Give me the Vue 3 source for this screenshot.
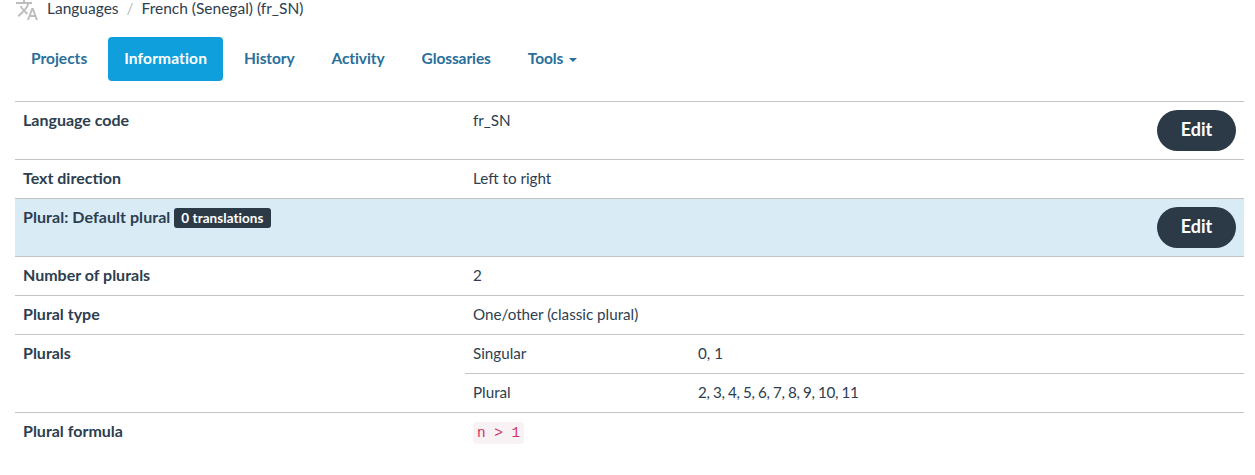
<template>
  <div class="page">
    <nav class="crumbs">
      <svg class="crumb-icon" viewBox="0 0 24 24" width="24" height="24">
        <path d="M12.87,15.07L10.33,12.56L10.36,12.53C12.1,10.59 13.34,8.36 14.07,6H17V4H10V2H8V4H1V6H12.17C11.5,7.92 10.44,9.75 9,11.35C8.07,10.32 7.3,9.19 6.69,8H4.69C5.42,9.63 6.42,11.17 7.67,12.56L2.58,17.58L4,19L9,14L12.11,17.11L12.87,15.07M18.5,10H16.5L12,22H14L15.12,19H19.87L21,22H23L18.5,10M15.88,17L17.5,12.67L19.12,17H15.88Z" />
      </svg>
      <a class="crumb">Languages</a>
      <span class="crumb-sep">/</span>
      <a class="crumb">French (Senegal) (fr_SN)</a>
    </nav>

    <ul class="tabs">
      <li v-for="tab in tabs" :key="tab" class="tab" :class="{ active: tab === 'Information' }">
        {{ tab }}
        <span v-if="tab === 'Tools'" class="caret"></span>
      </li>
    </ul>

    <table class="info">
      <colgroup>
        <col class="col-head" />
        <col class="col-mid" />
        <col />
        <col class="col-btn" />
      </colgroup>
      <tbody>
        <tr class="tall">
          <th>Language code</th>
          <td colspan="2">fr_SN</td>
          <td class="btn-cell"><button class="edit">Edit</button></td>
        </tr>
        <tr>
          <th>Text direction</th>
          <td colspan="3">Left to right</td>
        </tr>
        <tr class="tall highlight">
          <th colspan="3">Plural: Default plural <span class="badge">0 translations</span></th>
          <td class="btn-cell"><button class="edit">Edit</button></td>
        </tr>
        <tr>
          <th>Number of plurals</th>
          <td colspan="3">2</td>
        </tr>
        <tr>
          <th>Plural type</th>
          <td colspan="3">One/other (classic plural)</td>
        </tr>
        <tr>
          <th rowspan="2">Plurals</th>
          <td>Singular</td>
          <td colspan="2">0, 1</td>
        </tr>
        <tr>
          <td>Plural</td>
          <td colspan="2" class="digits">2, 3, 4, 5, 6, 7, 8, 9, 10, 11</td>
        </tr>
        <tr>
          <th>Plural formula</th>
          <td colspan="3"><code class="formula">n &gt; 1</code></td>
        </tr>
      </tbody>
    </table>
  </div>
</template>

<script setup>
const tabs = ['Projects', 'Information', 'History', 'Activity', 'Glossaries', 'Tools']
</script>

<style>
html,
body {
  margin: 0;
  background: #fff;
  overflow: hidden;
}
</style>

<style scoped>
.page {
  padding: 0 11px 0 15px;
  font-family: Lato, "Open Sans", sans-serif;
  font-size: 15.2px;
  color: #2c3e50;
  height: 475px;
  box-sizing: border-box;
  overflow: hidden;
}

.crumbs {
  display: flex;
  align-items: flex-start;
  height: 24px;
  margin-top: -2px;
  font-size: 15.5px;
  line-height: 20px;
  white-space: nowrap;
}

.crumb-icon {
  width: 24px;
  height: 24px;
  margin-right: 8px;
  fill: #bdbdbd;
  flex: none;
}

.crumb-sep {
  margin: 0 8px;
  color: #bbb;
}

.tabs {
  display: flex;
  gap: 5px;
  list-style: none;
  margin: 15px 0 20px;
  padding: 0;
}

.tab {
  padding: 0 16px;
  height: 44px;
  line-height: 42px;
  font-size: 15.5px;
  font-weight: 700;
  color: #2a6f9b;
  border-radius: 4px;
  white-space: nowrap;
}

.tab:nth-child(n+3) {
  letter-spacing: -0.1px;
}

.tab.active {
  background: #0f9fdc;
  color: #fff;
  letter-spacing: 0.15px;
}

.caret {
  display: inline-block;
  width: 0;
  height: 0;
  margin-left: 2px;
  vertical-align: middle;
  border-top: 4px solid #2a6f9b;
  border-left: 4px solid transparent;
  border-right: 4px solid transparent;
}

.info {
  width: 1229px;
  border-collapse: collapse;
  table-layout: fixed;
  line-height: 20px;
}

.col-head {
  width: 450px;
}

.col-mid {
  width: 225px;
}

.col-btn {
  width: 100px;
}

.info th,
.info td {
  padding: 8px 8px 10px;
  height: 20px;
  text-align: left;
  vertical-align: top;
  border-top: 1px solid #c4c4c4;
}

.info th {
  font-size: 16px;
  font-weight: 700;
}

.info td {
  font-weight: 400;
}

.info .digits {
  letter-spacing: -0.38px;
}

.highlight th,
.highlight td {
  background: #d9ecf6;
}

.highlight th {
  letter-spacing: 0.06px;
}

.info .btn-cell {
  text-align: right;
  padding-top: 8px;
  padding-bottom: 8px;
}

.edit {
  width: 79px;
  height: 41px;
  padding: 0 0 3px;
  border: 0;
  border-radius: 21px;
  background: #2c3a48;
  color: #fff;
  font: 700 18px Lato, "Open Sans", sans-serif;
}

.badge {
  display: inline-block;
  padding: 0 7px;
  line-height: 20px;
  border-radius: 3px;
  background: #2c3a48;
  color: #fff;
  font-size: 13.5px;
  font-weight: 700;
}

.formula {
  display: inline-block;
  padding: 0 4px;
  border-radius: 4px;
  background: #f9f2f4;
  color: #d12f6a;
  font-family: "Liberation Mono", monospace;
  font-size: 14.4px;
  line-height: 22px;
}
</style>
